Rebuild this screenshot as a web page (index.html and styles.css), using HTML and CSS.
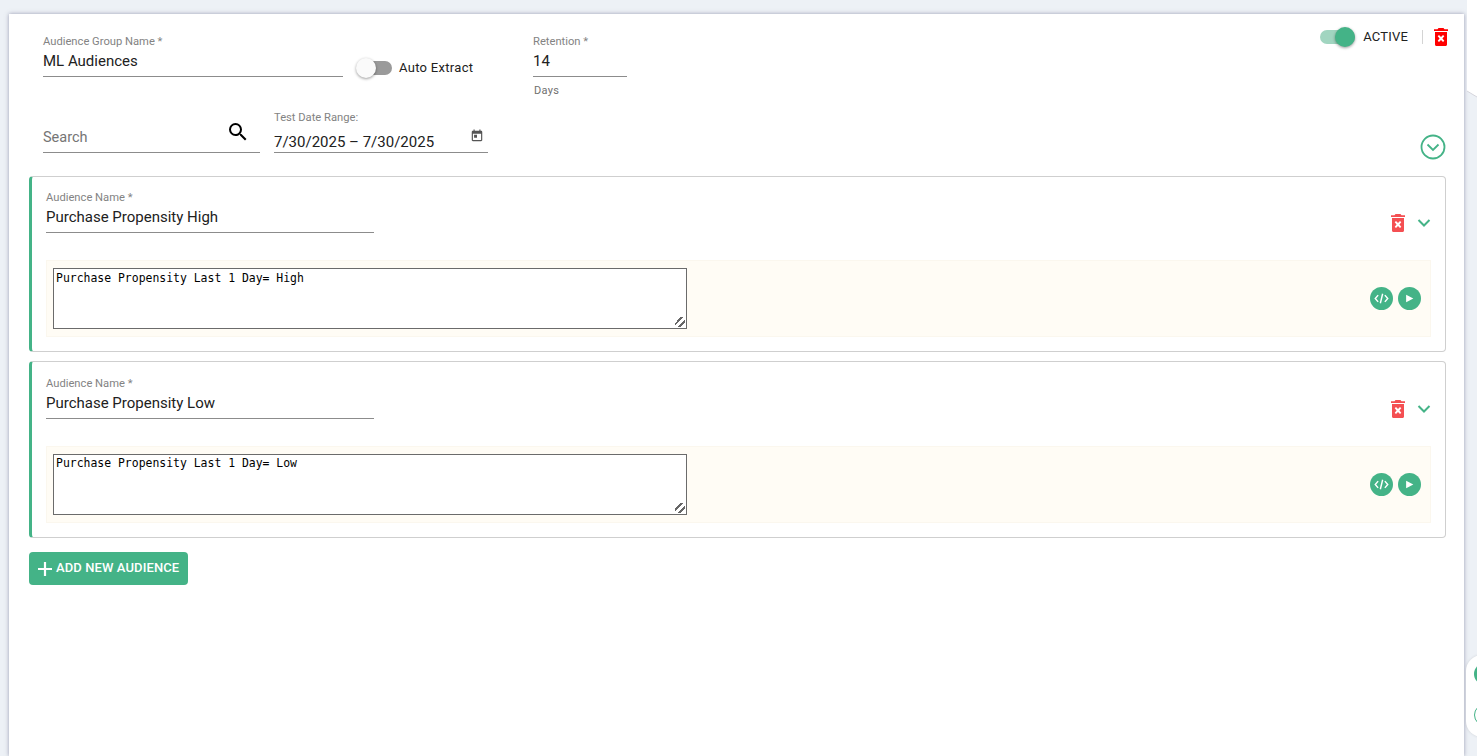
FILE: index.html
```
<!DOCTYPE html>
<html lang="en">
<head>
<meta charset="utf-8">
<title>Audience Group</title>
<link rel="stylesheet" href="styles.css">
</head>
<body>
<main class="panel">
  <section class="group-row">
    <div class="field name-field">
      <label class="label">Audience Group Name *</label>
      <div class="value">ML Audiences</div>
    </div>
    <div class="switch-wrap">
      <span class="switch off"><span class="track"></span><span class="thumb"></span></span>
      <span class="switch-text">Auto Extract</span>
    </div>
    <div class="retention">
      <div class="field retention-field">
        <label class="label">Retention *</label>
        <div class="value">14</div>
      </div>
      <div class="hint">Days</div>
    </div>
    <div class="status">
      <span class="switch on"><span class="track"></span><span class="thumb"></span></span>
      <span class="status-text">ACTIVE</span>
      <span class="divider"></span>
      <svg class="trash bright" viewBox="0 0 14 18"><use href="#trash-shape"/></svg>
    </div>
  </section>

  <section class="filter-row">
    <div class="field search-field">
      <span class="placeholder">Search</span>
      <svg class="search-icon" viewBox="0 0 24 24"><path d="M15.5 14h-.79l-.28-.27A6.47 6.47 0 0 0 16 9.5 6.5 6.5 0 1 0 9.5 16c1.61 0 3.09-.59 4.23-1.57l.27.28v.79l5 4.99L20.49 19l-4.99-5zm-6 0C7.01 14 5 11.99 5 9.5S7.01 5 9.5 5 14 7.01 14 9.5 11.99 14 9.5 14z"/></svg>
    </div>
    <div class="field date-field">
      <label class="label">Test Date Range:</label>
      <div class="date-value">7/30/2025 – 7/30/2025</div>
      <svg class="calendar-icon" viewBox="0 0 24 24"><path d="M19 3h-1V1h-2v2H8V1H6v2H5c-1.1 0-2 .9-2 2v14c0 1.1.9 2 2 2h14c1.1 0 2-.9 2-2V5c0-1.100-.9-2-2-2zm0 16H5V8h14v11zM7 10h5v5H7z"/></svg>
    </div>
    <svg class="collapse-all" viewBox="0 0 26 26"><circle cx="13" cy="13" r="11.500"/><path d="M7.500 10.500 13 16l5.500-5.500"/></svg>
  </section>

  <article class="audience">
    <div class="audience-head">
      <div class="field audience-field">
        <label class="label">Audience Name *</label>
        <div class="value">Purchase Propensity High</div>
      </div>
      <div class="audience-actions">
        <svg class="trash soft" viewBox="0 0 14 18"><use href="#trash-shape"/></svg>
        <svg class="chevron" viewBox="0 0 14 10"><path d="M1.500 2 7 7.500 12.500 2"/></svg>
      </div>
    </div>
    <div class="query-box">
      <textarea class="query" spellcheck="false">Purchase Propensity Last 1 Day= High</textarea>
      <div class="query-actions">
        <span class="round-btn"><svg viewBox="0 0 24 24"><path class="code" d="M8.500 8.500 5.500 12l3 3.500M15.500 8.500l3 3.500-3 3.500M13.200 7l-2.400 10"/></svg></span>
        <span class="round-btn"><svg viewBox="0 0 24 24"><path d="M8.500 8v8l7.500-4z"/></svg></span>
      </div>
    </div>
  </article>

  <article class="audience">
    <div class="audience-head">
      <div class="field audience-field">
        <label class="label">Audience Name *</label>
        <div class="value">Purchase Propensity Low</div>
      </div>
      <div class="audience-actions">
        <svg class="trash soft" viewBox="0 0 14 18"><use href="#trash-shape"/></svg>
        <svg class="chevron" viewBox="0 0 14 10"><path d="M1.500 2 7 7.500 12.500 2"/></svg>
      </div>
    </div>
    <div class="query-box">
      <textarea class="query" spellcheck="false">Purchase Propensity Last 1 Day= Low</textarea>
      <div class="query-actions">
        <span class="round-btn"><svg viewBox="0 0 24 24"><path class="code" d="M8.500 8.500 5.500 12l3 3.500M15.500 8.500l3 3.500-3 3.500M13.200 7l-2.400 10"/></svg></span>
        <span class="round-btn"><svg viewBox="0 0 24 24"><path d="M8.500 8v8l7.500-4z"/></svg></span>
      </div>
    </div>
  </article>

  <button class="add-btn" type="button">
    <svg viewBox="0 0 16 16"><path d="M8 1v14M1 8h14"/></svg>
    <span class="add-text">ADD NEW AUDIENCE</span>
  </button>
</main>

<svg class="edge-tab" viewBox="0 0 10 98"><path class="edge-fill" d="M0 0H10V97L0 91Z"/><path class="edge-line" d="M0 91L10 97"/></svg>
<aside class="edge-widget">
  <span class="edge-dot"></span>
  <span class="edge-ring"></span>
</aside>

<svg class="defs" width="0" height="0" aria-hidden="true">
  <symbol id="trash-shape" viewBox="0 0 14 18">
    <path fill-rule="evenodd" d="M4.500 0h5l1 1.300H14v1.700H0V1.300h3.500zM1 4h12v12.500c0 .9-.6 1.500-1.500 1.500h-9C1.600 18 1 17.400 1 16.500zM5 7 3.700 8.300 5.600 10.500 3.700 12.700 5 14l2-2.100L9 14l1.300-1.300-1.900-2.200 1.900-2.200L9 7 7 9.100z"/>
  </symbol>
</svg>
</body>
</html>
```
FILE: styles.css
```
* { box-sizing: border-box; }

html, body { height: 100%; }

body {
  margin: 0;
  background: #edf1f6;
  font-family: Roboto, "Liberation Sans", sans-serif;
  color: #212121;
  overflow: hidden;
}

.panel {
  margin: 14px 13px 0 9px;
  height: 742px;
  padding: 0 18px 0 20px;
  background: #fff;
  box-shadow: 0 0 4px rgba(70, 70, 110, .5);
}

.group-row {
  display: flex;
  align-items: flex-start;
  padding: 21px 0 0 14px;
  height: 98px;
}

.field { position: relative; border-bottom: 1px solid #8c8c8c; }

.label {
  display: block;
  font-size: 11.200px;
  line-height: 13px;
  color: #838383;
}

.value {
  font-size: 15px;
  line-height: 20px;
  color: #212121;
}

.name-field { width: 300px; height: 42px; }
.name-field .value { margin-top: 3px; }

.switch-wrap {
  display: flex;
  align-items: center;
  margin: 23px 0 0 14px;
  width: 176px;
}

.switch { position: relative; display: inline-block; width: 35px; height: 20px; }
.track { position: absolute; left: 0; right: 0; top: 3px; height: 14px; border-radius: 7px; }
.thumb { position: absolute; top: 0; width: 20px; height: 20px; border-radius: 50%; box-shadow: 0 1px 3px rgba(0, 0, 0, .4); }
.switch.off .track { background: #9a9a9a; }
.switch.off .thumb { left: -1px; background: #fafafa; }
.switch.on .track { background: #a1d5c0; }
.switch.on .thumb { right: 0; background: #44b387; }

.switch-text { margin: 0 0 2px 7px; font-size: 13px; letter-spacing: .3px; color: #212121; }

.retention { width: 94px; }
.retention-field { height: 42px; }
.retention-field .value { margin-top: 3px; }
.hint { margin-top: 7px; padding-left: 1px; font-size: 11px; line-height: 13px; letter-spacing: .3px; color: #6f6f6f; }

.status {
  display: flex;
  align-items: center;
  margin: -8px -2px 0 auto;
}
.status-text { margin: 0 0 2px 8px; font-size: 13px; letter-spacing: .2px; color: #212121; }
.divider { width: 1px; height: 14px; margin: 0 11px 0 14px; background: #d4d4d4; }

.trash { display: block; width: 14px; height: 18px; }
.trash.bright { fill: #f00; }
.trash.soft { fill: #f44f52; }

.filter-row {
  position: relative;
  display: flex;
  align-items: flex-end;
  height: 64px;
  padding: 0 0 23px 14px;
}

.search-field {
  display: flex;
  align-items: center;
  justify-content: space-between;
  width: 217px;
  height: 31px;
}
.placeholder { font-size: 14.500px; color: #757575; }
.search-icon { width: 24px; height: 24px; margin: -11px 10px 0 0; fill: #000; }

.date-field { width: 214px; height: 42px; margin-left: 14px; }
.date-value { margin-top: 7px; font-size: 15px; line-height: 22px; color: #212121; }
.calendar-icon { position: absolute; right: 4px; top: 18px; width: 14px; height: 14px; fill: #555; }

.collapse-all {
  position: absolute;
  right: 0;
  top: 22px;
  width: 26px;
  height: 26px;
  fill: none;
  stroke: #44b387;
  stroke-width: 1.800;
}

.audience {
  margin-bottom: 10px;
  height: 176px;
  padding: 0 14px 0 14px;
  border: 1px solid #cfcfcf;
  border-left: 3px solid #44b387;
  border-radius: 4px;
}

.audience + .audience {
  margin-top: -1px;
  height: 177px;
  padding-top: 1px;
}

.audience-head { display: flex; justify-content: space-between; height: 83px; }

.audience-field { width: 328px; height: 56px; padding-top: 14px; }
.audience-field .value { margin-top: 3px; }

.audience-actions { display: flex; align-items: center; gap: 12px; margin-top: 10px; height: 72px; }
.chevron { width: 14px; height: 10px; fill: none; stroke: #44b387; stroke-width: 2; }

.query-box {
  display: flex;
  align-items: center;
  justify-content: space-between;
  height: 77px;
  padding: 0 9px 0 6px;
  background: #fffcf5;
  border: 1px solid #fbf7ee;
}

.query {
  display: block;
  width: 634px;
  height: 61px;
  padding: 2px;
  margin: 0;
  border: 1px solid #6b6b6b;
  border-radius: 0;
  outline: none;
  background: #fff;
  color: #000;
  font-family: "DejaVu Sans Mono", monospace;
  font-size: 11.450px;
  line-height: 15px;
}

.audience + .audience .query { padding-top: 1px; }

.query::-webkit-resizer {
  background: linear-gradient(135deg, transparent 30%, #666 30%, #666 44%, transparent 44%, transparent 62%, #666 62%, #666 76%, transparent 76%) right 1px bottom 1px / 10px 10px no-repeat;
}

.query-actions { display: flex; gap: 5px; }
.round-btn { display: block; width: 23px; height: 23px; border-radius: 50%; background: #44b387; }
.round-btn svg { display: block; width: 23px; height: 23px; fill: #fff; }
.round-btn .code { fill: none; stroke: #fff; stroke-width: 1.500; }

.add-btn {
  display: flex;
  align-items: center;
  gap: 3px;
  width: 159px;
  height: 33px;
  margin-top: 14px;
  padding: 0 0 0 8px;
  border: 0;
  border-radius: 4px;
  background: #44b387;
  color: #fff;
  font-family: Roboto, "Liberation Sans", sans-serif;
  font-size: 13px;
  font-weight: 500;
  letter-spacing: .1px;
  white-space: nowrap;
}
.add-btn svg { flex: none; width: 16px; height: 16px; fill: none; stroke: #fff; stroke-width: 2.200; }
.add-text { margin-bottom: 2px; }

.edge-tab {
  position: absolute;
  left: 1467px;
  top: 0;
  width: 10px;
  height: 98px;
}
.edge-fill { fill: #fff; }
.edge-line { fill: none; stroke: #d5d5dc; stroke-width: 1; }

.edge-widget {
  position: absolute;
  left: 1466px;
  top: 655px;
  width: 40px;
  height: 82px;
  background: #fff;
  border-radius: 16px 0 0 16px;
  box-shadow: 0 0 3px rgba(0, 0, 0, .12);
}
.edge-dot, .edge-ring { position: absolute; left: 8px; width: 22px; height: 22px; border-radius: 50%; }
.edge-dot { top: 8px; background: #44b387; }
.edge-ring { top: 49px; border: 1px solid #44b387; }

.defs { position: absolute; }
```
